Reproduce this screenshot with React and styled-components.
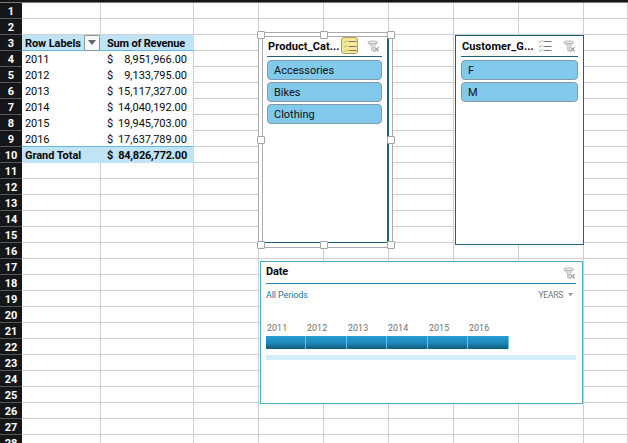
import React from 'react';
import styled, { createGlobalStyle } from 'styled-components';

const GlobalStyle = createGlobalStyle`
  * { box-sizing: border-box; }
  body { margin: 0; overflow: hidden; background: #fff; }
`;

const Sheet = styled.main`
  position: relative;
  width: 628px;
  height: 443px;
  overflow: hidden;
  background: #fff;
  color: #111;
  font-family: Roboto, "Liberation Sans", sans-serif;
`;

const TopEdge = styled.div`
  height: 3px;
  background: #161616;
  border-bottom: 1px solid #77797c;
`;

const Row = styled.div`
  display: grid;
  grid-template-columns: 22px 79px 93px repeat(6, 65px) 44px;
  height: 16px;
`;

const RowNumber = styled.div`
  height: 16px;
  background: #151617;
  border-bottom: 1px solid #55585a;
  color: #fff;
  font-size: 11px;
  font-weight: 700;
  line-height: 17px;
  text-align: center;
`;

const Cell = styled.div`
  border-right: 1px solid #cfcfcf;
  border-bottom: 1px solid #cfcfcf;
`;

const PivotCell = styled.div`
  display: flex;
  align-items: flex-start;
  justify-content: space-between;
  height: 16px;
  padding-left: ${(p) => (p.$amount ? 6 : 3)}px;
  padding-right: ${(p) => (p.$amount ? (p.$strong ? 7 : 6) : 0)}px;
  background: ${(p) => (p.$strong ? '#c0e4f5' : '#fff')};
  border-right: ${(p) => (p.$amount && !p.$strong ? '1px solid #cfcfcf' : '0')};
  border-bottom: ${(p) => (p.$rule ? '1px solid #66b9dd' : '0')};
  color: #080808;
  font-size: 11px;
  font-weight: ${(p) => (p.$strong ? 700 : 400)};
  letter-spacing: ${(p) => p.$track || 0}px;
  line-height: 17px;
  white-space: nowrap;
`;

const FilterButton = styled.div`
  display: flex;
  width: 16px;
  height: 16px;
  margin-right: 1px;
  align-items: center;
  justify-content: center;
  background: #f6f8fa;
  border: 1px solid #919699;
  border-radius: 1px;
`;

const SlicerPanel = styled.section`
  position: absolute;
  left: ${(p) => p.$left}px;
  top: ${(p) => (p.$selected ? 36 : 35)}px;
  width: ${(p) => p.$width}px;
  height: ${(p) => p.$height}px;
  padding: ${(p) => (p.$selected ? '1px 5px 0 4px' : '2px 5px 0 5px')};
  background: #fff;
  border: solid #17647b;
  border-width: ${(p) => (p.$selected ? '1px 2px 1px 1px' : '1px')};
  border-top-color: ${(p) => (p.$selected ? '#aaa' : '#17647b')};
  border-left-color: ${(p) => (p.$selected ? '#aaa' : '#17647b')};
`;

const SlicerHeader = styled.header`
  display: flex;
  align-items: center;
  height: 19px;
  border-bottom: 1px solid #1d647b;
  padding-left: 1px;
`;

const SlicerTitle = styled.h2`
  flex: none;
  width: 73px;
  margin: -2px 0 0;
  color: #080808;
  font-size: 11px;
  font-weight: 700;
  letter-spacing: ${(p) => p.$track}px;
  line-height: 17px;
  white-space: nowrap;
`;

const MultiButton = styled.span`
  display: flex;
  flex: none;
  width: 17px;
  height: 17px;
  margin: -3px 0 0 ${(p) => (p.$active ? 0 : 1)}px;
  align-items: center;
  justify-content: center;
  background: ${(p) => (p.$active ? '#f8e991' : 'transparent')};
  border: 1px solid ${(p) => (p.$active ? '#a9a06d' : 'transparent')};
  border-radius: 3px;
`;

const ClearButton = styled.span`
  display: flex;
  margin: -2px 2px 0 auto;
`;

const SlicerItems = styled.div`
  display: grid;
  gap: 2px;
  margin-top: 3px;
`;

const SlicerItem = styled.div`
  height: 20px;
  padding-left: 6px;
  background: #82caeb;
  border: 1px solid #829aa5;
  border-radius: 4px;
  font-size: 11px;
  letter-spacing: 0;
  line-height: 19px;
`;

const SelectionFrame = styled.div`
  position: absolute;
  left: 258px;
  top: 32px;
  width: 135px;
  height: 216px;
  background: #fff;
  border: 1px solid #aaa;
`;

const Handle = styled.i`
  position: absolute;
  left: ${(p) => p.$x}px;
  top: ${(p) => p.$y}px;
  width: 8px;
  height: 8px;
  background: #fff;
  border: 1px solid #a5a5a5;
  border-radius: 1px;
`;

const TimelinePanel = styled.section`
  position: absolute;
  left: 260px;
  top: 261px;
  width: 323px;
  height: 143px;
  padding: 1px 6px 0 5px;
  background: #fff;
  border: 1px solid #4dabc3;
`;

const TimelineHeader = styled.header`
  display: flex;
  align-items: center;
  justify-content: space-between;
  height: 21px;
  border-bottom: 1px solid #318dbc;
  font-size: 11px;
  font-weight: 700;
  line-height: 17px;
`;

const TimelineTitle = styled.span`
  margin-top: -3px;
  color: #080808;
  letter-spacing: -0.2px;
`;

const PeriodBar = styled.div`
  display: flex;
  justify-content: space-between;
  align-items: center;
  height: 21px;
  color: #21799f;
  font-size: 9px;
  letter-spacing: -0.1px;
`;

const YearUnit = styled.span`
  display: flex;
  align-items: center;
  gap: 5px;
  padding-right: 3px;
  color: #777;
  font-size: 8.5px;
  letter-spacing: -0.25px;
`;

const YearScale = styled.div`
  display: grid;
  grid-template-columns: 40px 41px 40px 41px 40px 41px;
  margin-top: 16px;
`;

const YearLabel = styled.div`
  height: 15px;
  color: #6d6d6d;
  font-size: 8.8px;
  letter-spacing: 0.1px;
  line-height: 15px;
  padding-left: 1px;
`;

const YearSegment = styled.div`
  height: 13px;
  background: linear-gradient(#279cd1 0, #1e8abd 50%, #105a79 100%);
  border-right: 1px solid #67c2e6;
`;

const ScrollTrack = styled.div`
  height: 5px;
  margin-top: 6px;
  background: #d0edf8;
`;

const Triangle = ({ width = 8, color = '#626669' }) => (
  <svg width={width} height={width * 0.65} viewBox="0 0 8 5">
    <path d="M0 0h8L4 5z" fill={color} />
  </svg>
);

const Checklist = () => (
  <svg width="14" height="14" viewBox="0 0 14 14" fill="none">
    <path d="M.8 2.5l1.2 1.2L4.4 1M.8 7l1.2 1.2 2.4-2.6M.8 11.4L2 12.6l2.4-2.7" stroke="#9bbd8d" />
    <path d="M5.5 2.5h8M5.5 7.5h8M5.5 11.5h8" stroke="#777874" />
  </svg>
);

const ClearFilter = () => (
  <svg width="13" height="13" viewBox="0 0 13 13" fill="none">
    <path d="M1 2.5l3.7 4v3.9l2.2 1V6.5l3.7-4" fill="#dedede" stroke="#aaa" strokeWidth=".8" />
    <ellipse cx="5.8" cy="2.3" rx="5" ry="1.3" fill="#f1f1f1" stroke="#aaa" strokeWidth=".9" />
    <path d="M7.2 7l4.8 5M12 7l-4.8 5" stroke="#fff" strokeWidth="2.3" />
    <path d="M7.4 7.2l4.3 4.5M11.7 7.2l-4.3 4.5" stroke="#999" strokeWidth="1.2" />
  </svg>
);

const totals = [
  ['2011', '8,951,966.00'], ['2012', '9,133,795.00'],
  ['2013', '15,117,327.00'], ['2014', '14,040,192.00'],
  ['2015', '19,945,703.00'], ['2016', '17,637,789.00'],
];
const years = totals.map(([year]) => year);
const handles = [
  [257, 31], [320, 31], [387, 31], [257, 136],
  [387, 136], [257, 241], [320, 241], [387, 241],
];

function PivotCells({ row }) {
  if (row === 3) return <>
    <PivotCell $strong $rule $track={-0.08}>Row Labels<FilterButton><Triangle /></FilterButton></PivotCell>
    <PivotCell $strong $rule $amount $track={-0.2}>Sum of Revenue</PivotCell>
  </>;
  if (row === 10) return <>
    <PivotCell $strong $track={-0.05}>Grand Total</PivotCell>
    <PivotCell $strong $amount $track={-0.22}><span>$</span><span>84,826,772.00</span></PivotCell>
  </>;
  if (row > 3 && row < 10) {
    const [year, amount] = totals[row - 4];
    return <>
      <PivotCell $rule={row === 9} $track={-0.1}>{year}</PivotCell>
      <PivotCell $amount $rule={row === 9}><span>$</span><span>{amount}</span></PivotCell>
    </>;
  }
  return <><Cell /><Cell /></>;
}

function Slicer({ title, items, selected, left, width, height, track }) {
  return (
    <SlicerPanel $selected={selected} $left={left} $width={width} $height={height}>
      <SlicerHeader>
        <SlicerTitle $track={track}>{title}</SlicerTitle>
        <MultiButton $active={selected}><Checklist /></MultiButton>
        <ClearButton><ClearFilter /></ClearButton>
      </SlicerHeader>
      <SlicerItems>{items.map((item) => <SlicerItem key={item}>{item}</SlicerItem>)}</SlicerItems>
    </SlicerPanel>
  );
}

export default function App() {
  return <>
    <GlobalStyle />
    <Sheet>
      <TopEdge />
      {Array.from({ length: 28 }, (_, i) => (
        <Row key={i}>
          <RowNumber>{i + 1}</RowNumber>
          <PivotCells row={i + 1} />
          {Array.from({ length: 7 }, (_, c) => <Cell key={c} />)}
        </Row>
      ))}
      <SelectionFrame />
      <Slicer selected title="Product_Cat..." items={['Accessories', 'Bikes', 'Clothing']} left={262} width={127} height={207} track={0.1} />
      {handles.map(([x, y]) => <Handle key={`${x}-${y}`} $x={x} $y={y} />)}
      <Slicer title="Customer_G..." items={['F', 'M']} left={455} width={129} height={210} track={0.12} />
      <TimelinePanel>
        <TimelineHeader><TimelineTitle>Date</TimelineTitle><ClearFilter /></TimelineHeader>
        <PeriodBar><span>All Periods</span><YearUnit>YEARS<Triangle width={5} color="#999" /></YearUnit></PeriodBar>
        <YearScale>
          {years.map((year) => <div key={year}><YearLabel>{year}</YearLabel><YearSegment /></div>)}
        </YearScale>
        <ScrollTrack />
      </TimelinePanel>
    </Sheet>
  </>;
}
